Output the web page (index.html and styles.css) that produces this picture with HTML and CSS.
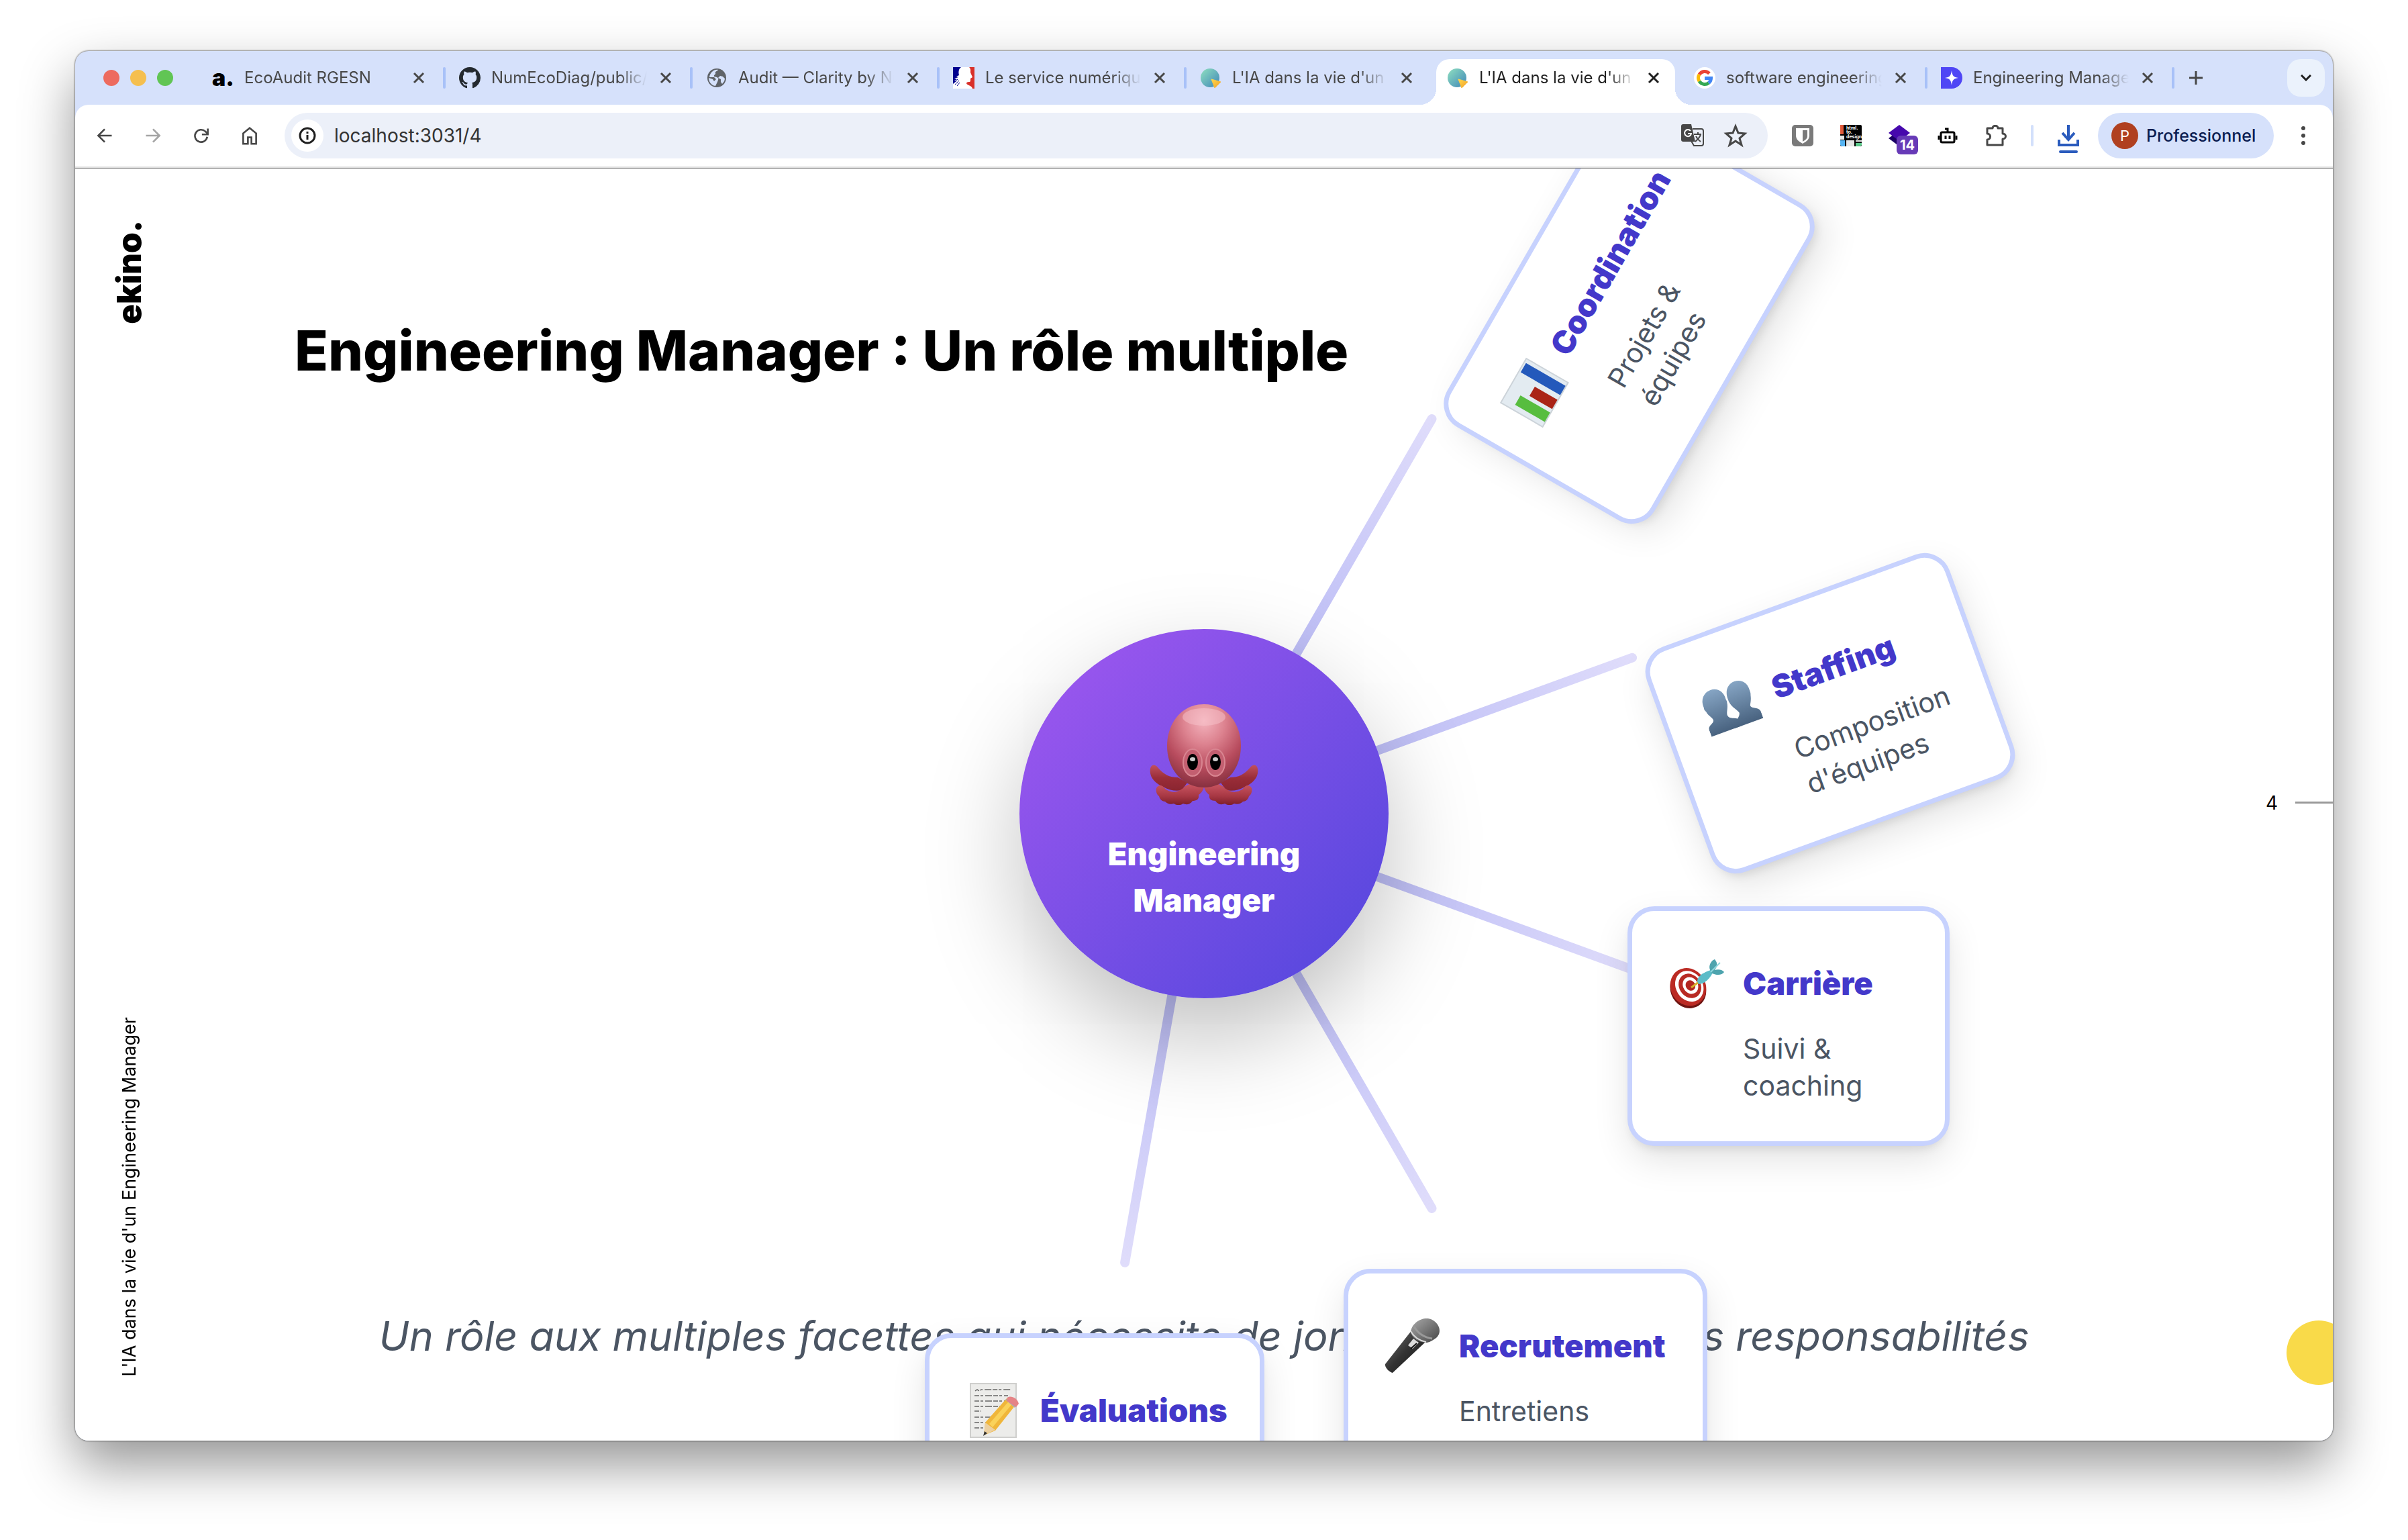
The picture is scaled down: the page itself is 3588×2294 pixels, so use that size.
FILE: index.html
```
<!DOCTYPE html>
<html lang="fr">
<head>
<meta charset="utf-8">
<title>L'IA dans la vie d'un Engineering Manager</title>
<link rel="stylesheet" href="styles.css">
</head>
<body>
<svg class="defs" width="0" height="0" aria-hidden="true">
  <defs>
    <linearGradient id="sli" x1="0" y1="0" x2="1" y2="1"><stop offset="0" stop-color="#8fe0c0"/><stop offset="1" stop-color="#3f86b8"/></linearGradient>
    <linearGradient id="sliTip" x1="0" y1="0" x2="1" y2="1"><stop offset="0" stop-color="#ffd84a"/><stop offset="1" stop-color="#f2a02a"/></linearGradient>
    <symbol id="close" viewBox="0 0 18 18"><path d="M2 2l14 14M16 2L2 16" stroke="currentColor" stroke-width="3" fill="none"/></symbol>
    <symbol id="slidev" viewBox="0 0 32 32"><circle cx="15" cy="16" r="14" fill="url(#sli)"/><path d="M17 18l14 4-9 9z" fill="url(#sliTip)" stroke="url(#sliTip)" stroke-width="1" stroke-linejoin="round"/></symbol>
  </defs>
</svg>

<div class="window">
  <header class="tabstrip">
    <div class="lights"><span class="light red"></span><span class="light amber"></span><span class="light green"></span></div>
    <div class="tabs">
      <div class="tab"><button class="pick"><span class="fav-a">a.</span><span class="tab-title">EcoAudit RGESN</span></button><button class="close" aria-label="Fermer"><svg><use href="#close"/></svg></button></div>
      <div class="tab"><button class="pick">
        <svg class="fav" viewBox="0 0 16 16"><path fill="#24292f" d="M8 0C3.58 0 0 3.58 0 8c0 3.54 2.29 6.53 5.47 7.59.4.07.55-.17.55-.38 0-.19-.01-.82-.01-1.49-2.01.37-2.53-.49-2.69-.94-.09-.23-.48-.94-.82-1.13-.28-.15-.68-.52-.01-.53.63-.01 1.08.58 1.23.82.72 1.21 1.87.87 2.33.66.07-.52.28-.87.51-1.07-1.78-.2-3.64-.89-3.64-3.95 0-.87.31-1.59.82-2.15-.08-.2-.36-1.02.08-2.12 0 0 .67-.21 2.2.82.64-.18 1.32-.27 2-.27s1.36.09 2 .27c1.53-1.04 2.2-.82 2.2-.82.44 1.1.16 1.92.08 2.12.51.56.82 1.27.82 2.15 0 3.07-1.87 3.75-3.65 3.95.29.25.54.73.54 1.48 0 1.07-.01 1.93-.01 2.2 0 .21.15.46.55.38A8.01 8.01 0 0 0 16 8c0-4.42-3.58-8-8-8z"/></svg>
        <span class="tab-title">NumEcoDiag/public/data</span></button><button class="close" aria-label="Fermer"><svg><use href="#close"/></svg></button></div>
      <div class="tab"><button class="pick">
        <svg class="fav" viewBox="0 0 32 32"><circle cx="16" cy="16" r="14" fill="#5f6368"/><path d="M18 4c-1 2-5 2-4 5 1 2-3 2-2 5l4 1c2 1 3 2 2 4l-1 3c-1 2-2 4-3 6C7 27 4 21 4 16l6 2 2 3 3-3-3-3H5C6 8 12 3 18 4z" fill="#d5e1fb"/><path d="M21 13l4 1 3 3c0 3-2 6-4 8l-2-3v-4l-4-2z" fill="#d5e1fb"/></svg>
        <span class="tab-title">Audit — Clarity by NumEco</span></button><button class="close" aria-label="Fermer"><svg><use href="#close"/></svg></button></div>
      <div class="tab"><button class="pick">
        <svg class="fav" viewBox="0 0 32 32"><path fill="#fff" d="M0 0h32v32H0z"/><path fill="#00008f" d="M0 0h12c-4 3-4 8-3 12l-4 2 3 1-6 2 4 1-4 2 3 1-5 4z"/><path fill="#d9302a" d="M32 0H24c3 3 2 6 2 8l3 7-3 2v4c-1 2-5 0-6 3 0 3 8 3 9 8h3z"/><path d="M2 22l5-4M3 26l6-6M6 28l4-5" stroke="#00008f" stroke-width="1"/></svg>
        <span class="tab-title">Le service numérique</span></button><button class="close" aria-label="Fermer"><svg><use href="#close"/></svg></button></div>
      <div class="tab"><button class="pick"><svg class="fav"><use href="#slidev"/></svg><span class="tab-title">L'IA dans la vie d'un Engineering</span></button><button class="close" aria-label="Fermer"><svg><use href="#close"/></svg></button></div>
      <div class="tab active"><button class="pick"><svg class="fav"><use href="#slidev"/></svg><span class="tab-title">L'IA dans la vie d'un Engineering</span></button><button class="close" aria-label="Fermer"><svg><use href="#close"/></svg></button></div>
      <div class="tab"><button class="pick">
        <svg class="fav" viewBox="0 0 32 32"><circle cx="16" cy="16" r="16" fill="#fff"/><g fill="none" stroke-width="5"><path d="M23 9.500A9.500 9.500 0 0 0 8 11" stroke="#ea4335"/><path d="M8 11a9.500 9.500 0 0 0 0 10" stroke="#fbbc05"/><path d="M8 21a9.500 9.500 0 0 0 14 2.500" stroke="#34a853"/><path d="M22 23.500A9 9 0 0 0 25.500 16.500H16" stroke="#4285f4"/></g></svg>
        <span class="tab-title">software engineering manager</span></button><button class="close" aria-label="Fermer"><svg><use href="#close"/></svg></button></div>
      <div class="tab"><button class="pick">
        <svg class="fav" viewBox="0 0 32 32"><path d="M0 0h16a16 16 0 0 1 0 32H0z" fill="#4f46f5"/><path d="M16 5c1 8 3 10 10 11-7 1-9 3-10 11-1-8-3-10-10-11 7-1 9-3 10-11z" fill="#fff"/></svg>
        <span class="tab-title">Engineering Manager</span></button><button class="close" aria-label="Fermer"><svg><use href="#close"/></svg></button></div>
    </div>
    <button class="new-tab" aria-label="Nouvel onglet"><svg viewBox="0 0 20 20"><path d="M10 0v20M0 10h20" stroke="#474747" stroke-width="3"/></svg></button>
    <button class="tab-menu" aria-label="Rechercher des onglets"><svg viewBox="0 0 16 10"><path d="M1 1l7 7 7-7" fill="none" stroke="#1f1f1f" stroke-width="3"/></svg></button>
  </header>

  <nav class="toolbar">
    <button class="nav" aria-label="Retour"><svg viewBox="0 0 32 32"><path d="M28 16H6M16 5L5 16l11 11" fill="none" stroke="#474747" stroke-width="3"/></svg></button>
    <button class="nav" aria-label="Suivant" disabled><svg viewBox="0 0 32 32"><path d="M4 16h22M16 5l11 11-11 11" fill="none" stroke="#a5a5a5" stroke-width="3"/></svg></button>
    <button class="nav" aria-label="Actualiser"><svg viewBox="0 0 32 32"><path d="M26 18a10.500 10.500 0 1 1-3-9l4 4" fill="none" stroke="#474747" stroke-width="3"/><path d="M27 4v10H17" fill="none" stroke="#474747" stroke-width="3"/></svg></button>
    <button class="nav" aria-label="Accueil"><svg viewBox="0 0 32 32"><path d="M5 30V12l11-9 11 9v18h-8V19h-6v11z" fill="none" stroke="#474747" stroke-width="3"/></svg></button>
    <div class="omnibox">
      <button class="site" aria-label="Informations sur le site"><svg viewBox="0 0 28 28"><circle cx="14" cy="14" r="11" fill="none" stroke="#1f1f1f" stroke-width="3"/><path d="M14 13v7M14 8v3" stroke="#1f1f1f" stroke-width="3"/></svg></button>
      <input class="url" type="text" value="localhost:3031/4" aria-label="Adresse">
      <button class="omni-icon" aria-label="Traduire"><svg viewBox="0 0 36 36"><path d="M18 8h13a3 3 0 0 1 3 3v19a3 3 0 0 1-3 3H20l-4-7" fill="none" stroke="#474747" stroke-width="2"/><path d="M4 1h12l6 26H4a3 3 0 0 1-3-3V4a3 3 0 0 1 3-3z" fill="#474747"/><path d="M15 11a5 5 0 1 0 1 4h-5" fill="none" stroke="#fff" stroke-width="2"/><path d="M20 16h11M26 13v3M30 16c-1 5-5 8-8 11M23 19c2 4 4 6 7 8" fill="none" stroke="#474747" stroke-width="2"/></svg></button>
      <button class="omni-icon" aria-label="Ajouter aux favoris"><svg viewBox="0 0 36 36"><path d="M18 4l4 10 10 1-8 7 3 10-9-6-9 6 3-10-8-7 10-1z" fill="none" stroke="#474747" stroke-width="3"/></svg></button>
    </div>
    <div class="extensions">
      <button class="ext" aria-label="Bitwarden"><svg viewBox="0 0 32 32"><rect width="32" height="32" rx="5" fill="#7a7a7a"/><path d="M6 5h20v11c0 6-5 9-10 12-5-3-10-6-10-12z" fill="#fff"/><path d="M16 8h7v9c0 4-4 6-7 8z" fill="#7a7a7a"/></svg></button>
      <button class="ext" aria-label="html.to.design"><svg viewBox="0 0 32 32"><rect width="32" height="32" rx="2" fill="#000"/><path fill="#e05a3a" d="M0 0h5v14H0z"/><path fill="#e6e6e6" d="M0 16h6v6H0zM9 23h12v9H9zM23 23h9v2h-9z"/><path fill="#56b4f2" d="M0 23h7v9H2l-2-2z"/><path fill="#5ac98a" d="M23 27h9v3l-2 2h-7z"/><text x="9" y="7" class="ext-text">html.</text><text x="9" y="13" class="ext-text">to.</text><text x="9" y="20" class="ext-text">design</text></svg></button>
      <button class="ext" aria-label="Wappalyzer"><svg viewBox="0 0 32 32"><path d="M0 20l16-12 16 12-16 12z" fill="#1c0066"/><path d="M0 12L16 0l16 12-16 12z" fill="#4608ad"/></svg><span class="badge">14</span></button>
      <button class="ext" aria-label="Assistant"><svg viewBox="0 0 32 32"><g fill="none" stroke="#000" stroke-width="3"><rect x="6" y="11" width="20" height="15" rx="2"/><path d="M16 11V6h-4M3 16v6M29 16v6M13 16v5M19 16v5"/></g></svg></button>
      <button class="ext" aria-label="Extensions"><svg viewBox="0 0 32 32"><path d="M3 5h8c0-5 8-5 8 0h7v8c6 0 6 8 0 8v9H3v-8c6 0 6-9 0-9z" fill="none" stroke="#474747" stroke-width="3" stroke-linejoin="round"/></svg></button>
    </div>
    <span class="divider"></span>
    <button class="download" aria-label="Téléchargements"><svg viewBox="0 0 32 44"><path d="M16 0v21M7 12l9 10 9-10M2 22v8h28v-8" fill="none" stroke="#2a5bbd" stroke-width="4"/><path d="M4 40h24" stroke="#2a5bbd" stroke-width="4" stroke-linecap="round"/></svg></button>
    <button class="profile"><span class="avatar">P</span>Professionnel</button>
    <button class="more" aria-label="Menu"><svg viewBox="0 0 8 28"><circle cx="4" cy="3" r="3"/><circle cx="4" cy="14" r="3"/><circle cx="4" cy="25" r="3"/></svg></button>
  </nav>

  <main class="slide">
    <div class="rail"><span class="brand">ekino.</span><span class="deck">L'IA dans la vie d'un Engineering Manager</span></div>
    <div class="body">
      <h1>Engineering Manager : Un rôle multiple</h1>
      <p class="quote">Un rôle aux multiples facettes qui nécessite de jongler entre plusieurs responsabilités</p>
    </div>
    <div class="pager"><span>4</span><i class="tick"></i></div>
    <span class="sun"></span>

    <section class="map">
      <span class="spoke s1"></span><span class="spoke s2"></span><span class="spoke s3"></span><span class="spoke s4"></span><span class="spoke s5"></span>
      <div class="hub">
        <svg class="octopus" viewBox="0 0 162 150">
          <defs>
            <radialGradient id="oHead" cx=".5" cy=".2" r=".8"><stop offset="0" stop-color="#f4b3bd"/><stop offset=".35" stop-color="#dd8390"/><stop offset=".7" stop-color="#b84c5e"/><stop offset="1" stop-color="#87303f"/></radialGradient>
            <linearGradient id="oArm" x1="0" y1="0" x2="0" y2="1"><stop offset="0" stop-color="#c0505c"/><stop offset=".5" stop-color="#9a2d38"/><stop offset="1" stop-color="#8a2530"/></linearGradient>
            <linearGradient id="oFoot" x1="0" y1="0" x2="0" y2="1"><stop offset="0" stop-color="#cf5a66"/><stop offset=".6" stop-color="#a83844"/><stop offset="1" stop-color="#7d1e29"/></linearGradient>
          </defs>
          <g id="armL"><path d="M1 96c1-6 7-7 11-2 9 11 18 15 30 15l14 8-8 11c-9 2-19 0-26-4C7 118-1 108 1 96z" fill="url(#oArm)"/><path d="M10 125c3-6 9-5 13 1 10 8 22 5 30-4l12-6 16 7c-2 7-4 9-8 12 1 6-2 9-9 9-4 6-10 6-14 4-4 3-10 3-14 0-5 2-10 0-13-3-5 0-8-4-9-8-4-3-5-8-4-12z" fill="url(#oFoot)"/></g>
          <use href="#armL" transform="translate(162 0) scale(-1 1)"/>
          <path d="M81 0c34 0 55 29 55 62 0 38-26 62-55 62S26 100 26 62C26 29 47 0 81 0z" fill="url(#oHead)"/>
          <ellipse cx="81" cy="19" rx="32" ry="13" fill="#f8c3cb" opacity=".5"/>
          <g fill="#c35f70" stroke="#d98591" stroke-width="2"><ellipse cx="64" cy="87" rx="14" ry="20"/><ellipse cx="98" cy="87" rx="14" ry="20"/></g>
          <ellipse cx="64" cy="86" rx="8" ry="12"/><ellipse cx="98" cy="86" rx="8" ry="12"/>
          <g fill="#fff" opacity=".8"><ellipse cx="64" cy="82" rx="4" ry="3"/><ellipse cx="98" cy="82" rx="4" ry="3"/></g>
        </svg>
        <h2>Engineering<br>Manager</h2>
      </div>

      <article class="card coordination">
        <div class="head"><svg viewBox="0 0 82 82"><path d="M2 4h76v72H2z" fill="#e3ebf1"/><path d="M2 4h76v72H2z" fill="none" stroke="#ccd3d9" stroke-width="2"/><path d="M10 24h16v51H10z" fill="#57bd3f"/><path d="M32 36h16v39H32z" fill="#aa2417"/><path d="M56 7h16v68H56z" fill="#2459bb"/></svg><h3>Coordination</h3></div>
        <p>Projets &amp; équipes</p>
      </article>
      <article class="card staffing">
        <div class="head"><svg viewBox="0 -5 82 82"><defs><linearGradient id="bust" x1="0" y1="0" x2="0" y2="1"><stop offset="0" stop-color="#86a5c4"/><stop offset="1" stop-color="#48627f"/></linearGradient></defs><g fill="url(#bust)"><path d="M60 6c11 0 18 9 17 20 0 3 0 5-1 7-2 9-5 12-6 15 0 6 12 6 12 14v10H36c0-9 15-12 15-20-1-5-10-13-9-25C42 14 50 6 60 6z"/><path d="M22 6c11 0 18 9 17 20 0 2 1 4 0 6-1 8-6 13-6 18 1 8 13 7 14 12 1 3 1 7 1 10H0V62c0-8 11-7 11-13-1-5-5-8-6-15-1-2-2-4-1-7C3 15 11 6 22 6z"/></g></svg><h3>Staffing</h3></div>
        <p>Composition d'équipes</p>
      </article>
      <article class="card carriere">
        <div class="head"><svg viewBox="0 -3 82 82"><g transform="rotate(-32 29 44)"><ellipse cx="27" cy="46" rx="26" ry="29" fill="#6f1512"/><ellipse cx="29" cy="43" rx="26" ry="29" fill="#bb2b24"/><ellipse cx="31" cy="43" rx="20" ry="24" fill="#fff"/><ellipse cx="32" cy="43" rx="16" ry="19" fill="#b82a23"/><ellipse cx="33" cy="43" rx="11" ry="13" fill="#fff"/><ellipse cx="33" cy="43" rx="7" ry="8" fill="#b22620"/></g><path d="M33 44l15-11" stroke="#d8b02c" stroke-width="3"/><path d="M42 35c0-8 8-13 20-17l3 4c-5 10-12 16-21 17z" fill="#5cbcc8"/><path d="M61 18c-3-8 3-15 7-16 5 6 4 11 0 16 6-2 12 0 14 3-3 5-11 5-18 2z" fill="#4da4ae"/><path d="M62 21L76 7" stroke="#8fd8df" stroke-width="2"/></svg><h3>Carrière</h3></div>
        <p>Suivi &amp; coaching</p>
      </article>
      <article class="card recrutement">
        <div class="head"><svg viewBox="0 3 82 82"><defs><linearGradient id="mic" x1="0" y1="0" x2="1" y2="1"><stop offset="0" stop-color="#777"/><stop offset=".5" stop-color="#333"/><stop offset="1" stop-color="#111"/></linearGradient><linearGradient id="grille" x1="0" y1="0" x2="1" y2="1"><stop offset="0" stop-color="#aaa"/><stop offset=".5" stop-color="#777"/><stop offset="1" stop-color="#444"/></linearGradient></defs><path d="M0 71L40 20l20 18L11 84c-5-1-12-8-11-13z" fill="url(#mic)"/><path d="M38 23C40 8 58-1 70 5c13 7 15 22 3 29-4 3-9 5-13 5-10-1-20-6-22-16z" fill="url(#grille)"/><path d="M38 22c5 9 13 14 23 16" fill="none" stroke="#ddd" stroke-width="2"/><path d="M43 15c5 9 14 16 27 18" fill="none" stroke="#999" stroke-width="3"/><path d="M34 43l8-10 8 6-9 9z" fill="#ddd"/><path d="M38 48l9-8" stroke="#111" stroke-width="2"/></svg><h3>Recrutement</h3></div>
        <p>Entretiens</p>
      </article>
      <article class="card evaluations">
        <div class="head"><svg viewBox="0 3 82 82"><path d="M6 4h68v80H6z" fill="#ececea" stroke="#cfcfcd" stroke-width="2"/><g fill="none" stroke="#666" stroke-width="1.500" stroke-dasharray="7 2 4 3 10 2"><path d="M13 15l3-2 3 2 3-2h44M12 22h50M12 30h46M12 38h38M12 45h10M12 54h26M12 62h22M12 70h16"/></g><path d="M28 62l32-36 14 9-31 39-17 7z" fill="#f0b63a"/><path d="M34 64l32-37 5 4-32 38z" fill="#fad25a"/><path d="M58 28l8-3 9 11-3 4z" fill="#a6aeb8"/><path d="M61 25c4-4 15 0 17 9l-4 5-14-9z" fill="#e58487"/><path d="M28 62l15 11-17 8z" fill="#ecd0a0"/><path d="M27 75l4 3-6 4z" fill="#333"/></svg><h3>Évaluations</h3></div>
      </article>
    </section>
  </main>
</div>
</body>
</html>
```
FILE: styles.css
```
* { box-sizing: border-box; }
body {
  margin: 0;
  min-height: 100vh;
  padding: 76px 112px 148px;
  display: flex;
  background: #fff;
  font-family: Inter, "Liberation Sans", sans-serif;
  color: #000;
}
button { border: 0; padding: 0; margin: 0; background: none; font: inherit; color: inherit; display: flex; align-items: center; justify-content: center; }
.defs { position: absolute; }
h1, h2, h3, p { margin: 0; }

.window {
  flex: 1;
  min-width: 0;
  display: flex;
  flex-direction: column;
  border-radius: 20px;
  overflow: hidden;
  background: #d6e1fb;
  box-shadow: 0 0 2px 1px rgba(0, 0, 0, .4), 0 36px 80px rgba(0, 0, 0, .42);
}

/* Tab strip */
.tabstrip { display: flex; align-items: center; height: 80px; padding: 0 12px 0 42px; color: #474747; }
.lights { display: flex; gap: 16px; width: 140px; flex: none; }
.light { width: 24px; height: 24px; border-radius: 50%; }
.red { background: #ed6b5f; }
.amber { background: #f5bf4f; }
.green { background: #61c554; }
.tabs { display: flex; height: 80px; flex: 0 1 2944px; min-width: 0; }
.tab { flex: 1; min-width: 0; display: flex; align-items: center; padding: 0 22px; position: relative; font-size: 24px; line-height: 32px; }
.tab::after { content: ""; position: absolute; right: -2px; top: 24px; width: 4px; height: 32px; border-radius: 2px; background: #a8c1f8; }
.tab.active::after, .tab:has(+ .active)::after { display: none; }
.tab.active { color: #1f1f1f; }
.tab.active::before {
  content: "";
  position: absolute;
  inset: 12px -18px 0;
  background:
    radial-gradient(circle at 0 0, transparent 24px, #fff 24px) left bottom / 24px 24px no-repeat,
    radial-gradient(circle at 100% 0, transparent 24px, #fff 24px) right bottom / 24px 24px no-repeat;
}
.tab.active .pick::before { content: ""; position: absolute; inset: 12px 6px 0; background: #fff; border-radius: 20px 20px 0 0; }
.tab.active .fav, .tab.active .tab-title, .tab.active .close { position: relative; }
.pick { flex: 1; min-width: 0; gap: 16px; justify-content: flex-start; height: 80px; }
.fav { width: 32px; height: 32px; flex: none; }
.fav-a { width: 32px; flex: none; font-weight: 900; font-size: 34px; color: #000; }
.tab-title {
  flex: 1;
  text-align: left;
  white-space: nowrap;
  overflow: hidden;
  -webkit-mask-image: linear-gradient(90deg, #000 82%, transparent);
  mask-image: linear-gradient(90deg, #000 82%, transparent);
}
.close { width: 44px; height: 32px; justify-content: flex-end; padding-right: 7px; }
.close svg { width: 18px; height: 18px; }
.new-tab { width: 68px; height: 56px; }
.new-tab svg { width: 20px; height: 20px; }
.tab-menu { width: 56px; height: 56px; border-radius: 20px; background: #ebf2fc; margin-left: auto; }
.tab-menu svg { width: 16px; height: 10px; }

/* Toolbar */
.toolbar {
  display: flex;
  align-items: center;
  height: 95px;
  padding: 0 16px 3px 8px;
  background: #fff;
  border-radius: 20px 20px 0 0;
  border-bottom: 1px solid #666;
  box-shadow: inset 0 -2px #e1e1e1;
}
.nav { width: 72px; height: 56px; flex: none; }
.nav svg { width: 28px; height: 28px; }
.omnibox { flex: 1; min-width: 0; display: flex; align-items: center; height: 68px; margin-left: 16px; padding: 0 16px 0 10px; border-radius: 34px; background: #ecf0f9; }
.site { width: 48px; height: 48px; border-radius: 50%; background: #fff; flex: none; }
.site svg { width: 28px; height: 28px; }
.url { flex: 1; min-width: 0; border: 0; margin-left: 16px; padding: 0; background: none; font: 28px/40px Inter, "Liberation Sans", sans-serif; color: #333; }
.omni-icon { width: 64px; height: 48px; }
.omni-icon svg { width: 36px; height: 36px; }
.extensions { display: flex; margin-left: 16px; }
.ext { width: 72px; height: 48px; position: relative; }
.ext svg { width: 32px; height: 32px; }
.ext-text { font-size: 7px; font-weight: 700; fill: #fff; }
.badge { position: absolute; left: 32px; top: 24px; width: 32px; height: 28px; border-radius: 6px; background: #673ab7; color: #fff; font-size: 20px; line-height: 28px; font-weight: 700; }
.divider { width: 4px; height: 32px; border-radius: 2px; background: #d3e0fb; margin: 0 36px 0 16px; }
.download svg { width: 32px; height: 44px; margin-top: 12px; }
.profile { width: 262px; height: 68px; margin-left: 28px; padding-left: 20px; gap: 12px; justify-content: flex-start; border-radius: 34px; background: #d6e1fb; color: #0b1d51; font-size: 25px; font-weight: 500; }
.avatar { width: 40px; height: 40px; border-radius: 50%; background: #b04020; color: #fff; font-size: 22px; line-height: 40px; font-weight: 400; }
.more { flex: none; width: 56px; height: 48px; margin-left: 16px; }
.more svg { width: 8px; height: 28px; fill: #474747; }

/* Slide */
.slide { flex: 1; position: relative; display: flex; overflow: hidden; background: #fff; min-height: 1000px; }
.rail { width: 327px; flex: none; display: flex; flex-direction: column; justify-content: space-between; padding: 77px 0 96px 55px; }
.brand, .deck { writing-mode: vertical-rl; transform: rotate(180deg); line-height: 52px; }
.brand { font-size: 49px; font-weight: 900; }
.deck { font-size: 27px; }
.body { flex: 1; min-width: 0; display: flex; flex-direction: column; justify-content: space-between; padding: 222px 0 116px; }
h1 { font-size: 82px; line-height: 100px; font-weight: 800; white-space: nowrap; }
.quote { display: flex; justify-content: center; font-size: 61px; line-height: 80px; font-style: italic; color: #4b5563; white-space: nowrap; }
.pager { width: 327px; flex: none; display: flex; align-items: center; justify-content: flex-end; gap: 26px; padding-bottom: 6px; font-size: 28px; }
.tick { width: 56px; height: 3px; background: #999; }
.sun { position: absolute; right: -27px; bottom: 83px; width: 96px; height: 96px; border-radius: 50%; background: #f9da49; }

/* Role map, centred on the slide */
.map { position: absolute; left: 50%; top: 961px; width: 0; height: 0; }
.spoke { position: absolute; left: 0; top: -7px; width: 686px; height: 14px; border-radius: 7px; transform-origin: 0 50%; background: linear-gradient(90deg, #a5a8f2, #e0ddfb); }
.s1 { transform: rotate(-60deg); }
.s2 { transform: rotate(-20deg); }
.s3 { transform: rotate(20deg); }
.s4 { transform: rotate(60deg); }
.s5 { transform: rotate(100deg); }
.hub {
  position: absolute;
  left: -275px;
  top: -275px;
  width: 550px;
  height: 550px;
  padding-top: 112px;
  border-radius: 50%;
  display: flex;
  flex-direction: column;
  align-items: center;
  gap: 38px;
  background: linear-gradient(135deg, #a258f0, #5046dc);
  box-shadow: 0 58px 140px rgba(0, 0, 0, .25);
}
.octopus { width: 162px; height: 150px; flex: none; }
h2 { font-size: 47px; line-height: 69px; font-weight: 900; color: #fff; text-align: center; }
.card {
  position: absolute;
  width: 480px;
  height: 357px;
  padding: 67px 55px 0;
  border: 7px solid #c7d2fe;
  border-radius: 40px;
  background: #fff;
  box-shadow: 0 22px 56px -4px rgba(0, 0, 0, .12), 0 10px 16px -8px rgba(0, 0, 0, .12);
}
.head { display: flex; align-items: center; gap: 28px; height: 82px; }
.head svg { width: 82px; height: 82px; flex: none; }
h3 { font-size: 47px; line-height: 64px; font-weight: 900; color: #4338ca; }
.card p { margin: 29px 0 0 110px; font-size: 41px; line-height: 55px; color: #4b5563; }
.coordination { left: 361px; top: -921px; width: 545px; transform: rotate(-60deg); }
.staffing { left: 693px; top: -328px; transform: rotate(-20deg); }
.carriere { left: 631px; top: 138px; }
.recrutement { left: 208px; top: 678px; width: 542px; }
.evaluations { left: -416px; top: 774px; width: 506px; }
```
